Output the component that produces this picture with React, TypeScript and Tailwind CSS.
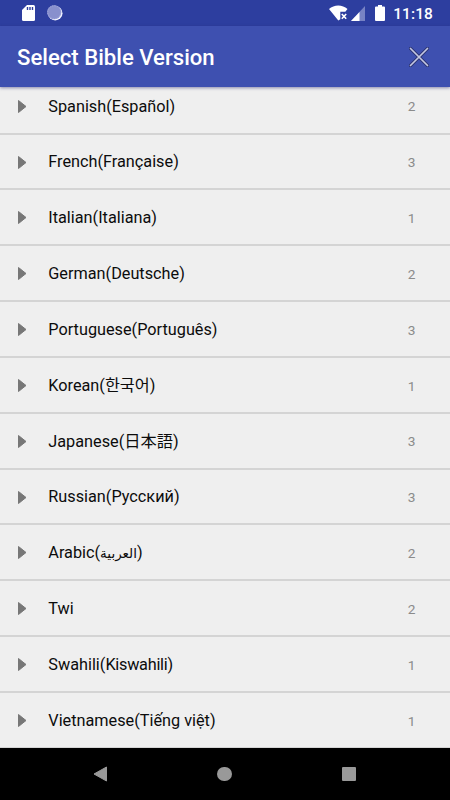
import React from "react";

interface Language {
  name: string;
  native?: string;
  count: number;
  nativeClass?: string;
}

const languages: Language[] = [
  { name: "Spanish", native: "Español", count: 2 },
  { name: "French", native: "Française", count: 3 },
  { name: "Italian", native: "Italiana", count: 1 },
  { name: "German", native: "Deutsche", count: 2 },
  { name: "Portuguese", native: "Português", count: 3 },
  { name: "Korean", native: "한국어", count: 1 },
  { name: "Japanese", native: "日本語", count: 3 },
  { name: "Russian", native: "Русский", count: 3 },
  { name: "Arabic", native: "العربية", count: 2, nativeClass: "text-[13.500px]" },
  { name: "Twi", count: 2 },
  { name: "Swahili", native: "Kiswahili", count: 1, nativeClass: "tracking-[-0.25px]" },
  { name: "Vietnamese", native: "Tiếng việt", count: 1 },
];

const StatusBar = () => {
  return (
    <div className="flex h-[26px] shrink-0 items-center justify-between bg-[#2d3e9f] pl-[22px] pr-[17px]">
      <div className="flex items-center gap-3">
        <svg width="13" height="16" viewBox="0 0 13 16">
          <path
            d="M5 0h6.500a1.500 1.500 0 0 1 1.500 1.500v13a1.500 1.500 0 0 1-1.500 1.500h-10A1.500 1.500 0 0 1 0 14.500V5z"
            fill="#fff"
          />
          <path d="M5.500 2v3M8 2v3M10.500 2v3" stroke="#2d3e9f" strokeWidth="1.400" />
        </svg>
        <svg width="16" height="16" viewBox="0 0 16 16">
          <circle cx="8.200" cy="8.200" r="7.300" fill="#f1f3ff" />
          <circle cx="7.200" cy="7.200" r="7" fill="#8890cd" />
          <circle cx="7.200" cy="7.200" r="6.500" fill="none" stroke="#a0a7dc" strokeWidth="1" strokeDasharray="1.500 1" />
        </svg>
      </div>
      <div className="flex items-center">
        <svg width="19" height="16" viewBox="0 0 19 16">
          <path d="M0 4C5-.7 13.500-.7 18.500 4l-2.200 2.700h-5v7.500L9.300 15.500z" fill="#fff" />
          <path d="M12.800 9l4.400 4.800M17.200 9l-4.400 4.800" stroke="#fff" strokeWidth="1.600" />
        </svg>
        <svg className="ml-[3px]" width="14" height="15" viewBox="0 0 14 15">
          <path d="M14 0v15H0z" fill="#7782c4" />
          <path d="M8.500 5.900V15H0z" fill="#fff" />
        </svg>
        <svg className="ml-[10px]" width="10" height="16" viewBox="0 0 10 16">
          <path
            d="M3 0h4v1.600h2a1 1 0 0 1 1 1V15a1 1 0 0 1-1 1H1a1 1 0 0 1-1-1V2.600a1 1 0 0 1 1-1h2z"
            fill="#fff"
          />
        </svg>
        <span className="ml-[8px] pt-[3px] text-[15.500px] font-medium leading-none text-white tracking-[0.1px]">
          11:18
        </span>
      </div>
    </div>
  );
};

const Header = () => {
  return (
    <header className="relative z-10 flex h-[61px] shrink-0 items-center justify-between bg-[#3e50b0] pl-[17px] pr-[21px] shadow-[0_1px_3px_rgba(40,40,110,0.5)]">
      <h1 className="pt-[3px] text-[22.150px] font-medium text-white">Select Bible Version</h1>
      <button aria-label="Close">
        <svg width="20" height="20" viewBox="0 0 20 20" strokeLinecap="round">
          <path d="M1.500 1.500l17 17M18.500 1.500l-17 17" stroke="#2c3470" strokeWidth="3.200" />
          <path d="M1.500 1.500l17 17M18.500 1.500l-17 17" stroke="#c3c7e3" strokeWidth="1.700" />
        </svg>
      </button>
    </header>
  );
};

const LanguageRow = ({ name, native, count, nativeClass }: Language) => {
  return (
    <li className="flex h-[55.840px] shrink-0 items-center border-b-2 border-[#d4d4d4] pl-[18px] pr-[34.500px]">
      <svg className="mt-px" width="9" height="13" viewBox="0 0 9 13">
        <path d="M.5.500L8 6.500.5 12.500z" fill="#777" stroke="#777" strokeLinejoin="round" />
      </svg>
      <span className="ml-[21.300px] flex-1 whitespace-nowrap pt-[2px] text-[16.250px] text-[#0c0c0c]">
        {name}
        {native && (
          <>
            (<span className={nativeClass}>{native}</span>)
          </>
        )}
      </span>
      <span className="pt-[2px] text-[13.700px] text-[#8b8b8b]">{count}</span>
    </li>
  );
};

const NavBar = () => {
  return (
    <nav className="flex h-[52.500px] shrink-0 items-center justify-between bg-black pl-[93px] pr-[94px]">
      <svg width="14" height="16" viewBox="0 0 14 16">
        <path d="M13.500 1v14L1 8z" fill="#999" stroke="#999" strokeLinejoin="round" />
      </svg>
      <div className="h-[14.500px] w-[14.500px] rounded-full bg-[#999]"></div>
      <div className="h-[14px] w-[14px] rounded-[1px] bg-[#999]"></div>
    </nav>
  );
};

const App = () => {
  return (
    <div className="flex h-[800px] w-[450px] flex-col overflow-hidden bg-[#efefef] font-[Roboto,'Noto_Sans_CJK_KR','DejaVu_Sans',sans-serif]">
      <StatusBar />
      <Header />
      <main className="min-h-0 flex-1 overflow-hidden">
        <ul className="-mt-[8.200px] flex flex-col">
          {languages.map((item) => (
            <LanguageRow key={item.name} {...item} />
          ))}
        </ul>
      </main>
      <NavBar />
    </div>
  );
};

export default App;
